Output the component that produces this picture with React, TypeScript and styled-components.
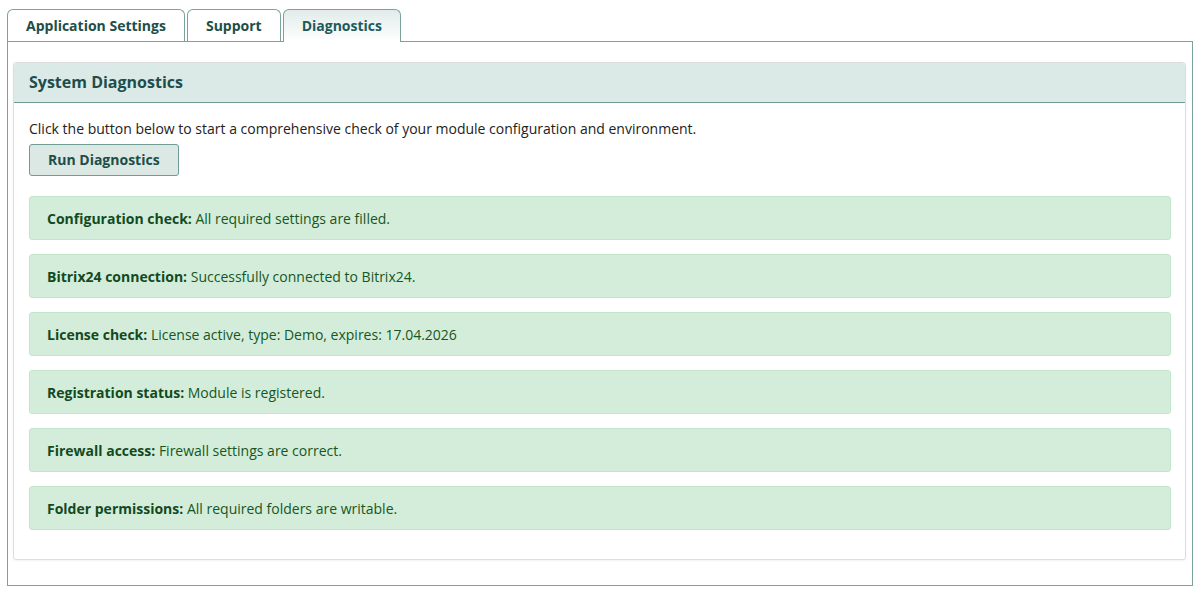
import React from "react";
import styled, { createGlobalStyle, css } from "styled-components";

const GlobalStyle = createGlobalStyle`
  html, body {
    margin: 0;
    padding: 0;
    background: #ffffff;
  }
  body {
    font-family: "Open Sans", "Liberation Sans", sans-serif;
    font-size: 14px;
    color: #222222;
  }
`;

const Page = styled.div`
  padding: 9px 5px 0 7px;
`;

const TabBar = styled.div`
  display: flex;
  gap: 2px;
  position: relative;
  z-index: 1;
`;

const Tab = styled.button<{ $active?: boolean }>`
  height: 32px;
  padding: 0 18px;
  border: 1px solid #7ba39b;
  border-bottom: none;
  border-radius: 6px 6px 0 0;
  background: #ffffff;
  font-family: inherit;
  font-size: 14px;
  font-weight: 700;
  color: #1e4e48;
  cursor: pointer;
  ${(p) =>
    p.$active &&
    css`
      height: 33px;
      margin-bottom: -1px;
      padding: 0 18px 1px;
      background: linear-gradient(#e1ecea, #ffffff);
      color: #1d5a5a;
    `}
`;

const Panel = styled.div`
  border: 1px solid #7ba39b;
  padding: 20px 6px 25px 5px;
`;

const Card = styled.section`
  border: 1px solid #dddddd;
  border-radius: 3px;
  box-shadow: 0 1px 2px rgba(0, 0, 0, 0.05);
`;

const CardHeader = styled.header`
  background: #dceae7;
  border-bottom: 1px solid #6f9d94;
  padding: 9px 15px 10px;
  border-radius: 3px 3px 0 0;
`;

const Title = styled.h2`
  margin: 0;
  font-size: 16px;
  line-height: 20px;
  font-weight: 700;
  color: #1e4e4c;
`;

const CardBody = styled.div`
  padding: 15px 14px 15px 15px;
`;

const Intro = styled.p`
  margin: 0 0 4px;
  line-height: 22px;
`;

const RunButton = styled.button`
  display: block;
  height: 32px;
  padding: 0 18px 2px;
  margin-bottom: 20px;
  background: #dbe8e4;
  border: 1px solid #6f9d94;
  border-radius: 3px;
  font-family: inherit;
  font-size: 14px;
  font-weight: 700;
  color: #1e4e48;
  cursor: pointer;
`;

const Alert = styled.div`
  background: #d4edda;
  border: 1px solid #c3e6cb;
  border-radius: 3px;
  color: #155724;
  padding: 12px 17px 10px;
  line-height: 20px;
  margin-bottom: 14px;

  strong {
    font-weight: 700;
    color: #124a1f;
  }
`;

const checks = [
  ["Configuration check:", "All required settings are filled."],
  ["Bitrix24 connection:", "Successfully connected to Bitrix24."],
  ["License check:", "License active, type: Demo, expires: 17.04.2026"],
  ["Registration status:", "Module is registered."],
  ["Firewall access:", "Firewall settings are correct."],
  ["Folder permissions:", "All required folders are writable."],
];

export default function App() {
  return (
    <Page>
      <GlobalStyle />
      <TabBar>
        <Tab>Application Settings</Tab>
        <Tab>Support</Tab>
        <Tab $active>Diagnostics</Tab>
      </TabBar>
      <Panel>
        <Card>
          <CardHeader>
            <Title>System Diagnostics</Title>
          </CardHeader>
          <CardBody>
            <Intro>
              Click the button below to start a comprehensive check of your module configuration and
              environment.
            </Intro>
            <RunButton>Run Diagnostics</RunButton>
            {checks.map(([label, text]) => (
              <Alert key={label}>
                <strong>{label}</strong> {text}
              </Alert>
            ))}
          </CardBody>
        </Card>
      </Panel>
    </Page>
  );
}
